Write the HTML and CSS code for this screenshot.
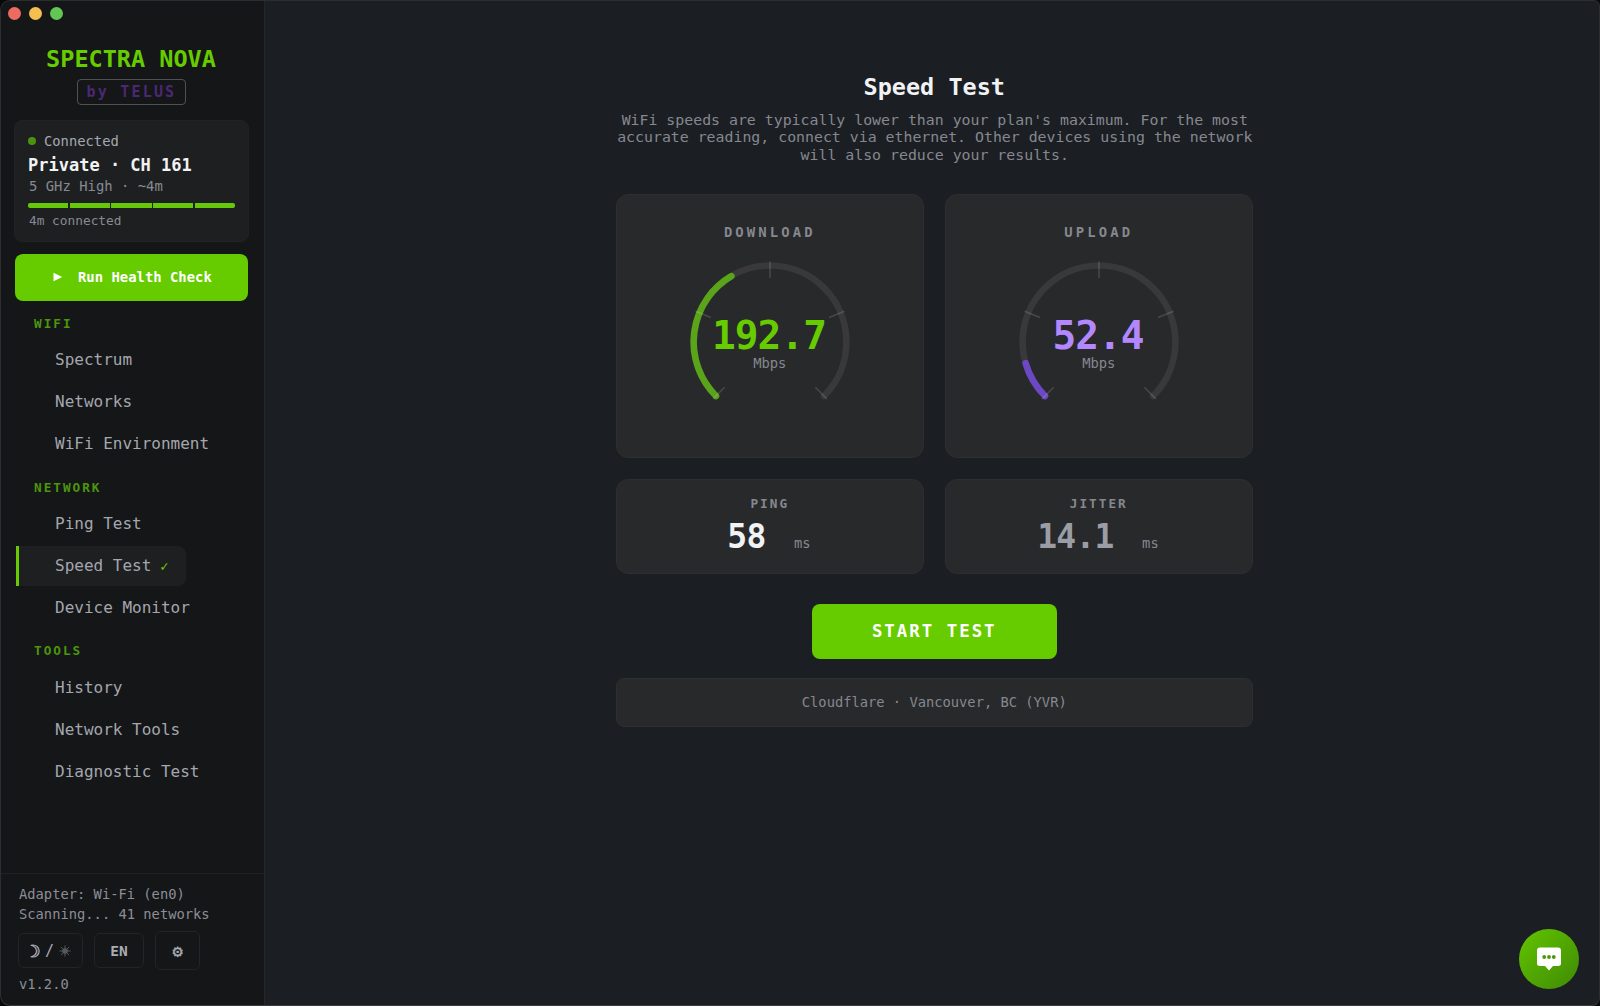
FILE: index.html
```html
<!DOCTYPE html>
<html lang="en">
<head>
<meta charset="utf-8">
<title>Spectra Nova</title>
<link rel="stylesheet" href="styles.css">
</head>
<body>
<div class="window">
  <aside class="sidebar">
    <div class="lights"><i class="light red"></i><i class="light amber"></i><i class="light green"></i></div>
    <div class="brand">
      <div class="brand-name">SPECTRA NOVA</div>
      <div class="brand-by">by TELUS</div>
    </div>
    <section class="status">
      <div class="status-state"><i class="dot"></i>Connected</div>
      <div class="status-name">Private · CH 161</div>
      <div class="status-band">5 GHz High · ~4m</div>
      <div class="signal"><i></i><i></i><i></i><i></i><i></i></div>
      <div class="status-time">4m connected</div>
    </section>
    <button class="health"><svg width="10" height="10" viewBox="0 0 10 10"><path d="M0.5 0.8 9.2 5 0.5 9.2Z" fill="#fff"/></svg><span>Run Health Check</span></button>
    <nav class="nav">
      <h3>WIFI</h3>
      <a>Spectrum</a>
      <a>Networks</a>
      <a>WiFi Environment</a>
      <h3>NETWORK</h3>
      <a>Ping Test</a>
      <a class="active">Speed Test<span class="check">✓</span></a>
      <a>Device Monitor</a>
      <h3>TOOLS</h3>
      <a>History</a>
      <a>Network Tools</a>
      <a>Diagnostic Test</a>
    </nav>
    <footer class="side-foot">
      <div class="foot-line">Adapter: Wi-Fi (en0)</div>
      <div class="foot-line">Scanning... 41 networks</div>
      <div class="foot-buttons">
        <button class="tool theme">
          <svg width="10" height="14" viewBox="0 0 10 14"><path d="M1 1.2C6.5 .2 9.2 3.6 9.2 7S6.5 13.8 1 12.8C4.500 11.800 6.400 9.600 6.400 7S4.500 2.200 1 1.200Z" fill="#a9acb3" fill-opacity=".35" stroke="#a9acb3" stroke-width="1.100" stroke-linejoin="round"/></svg>
          <span>/</span>
          <svg width="12" height="12" viewBox="-6 -6 12 12"><circle r="2.8" fill="#55585d"/><path d="M0-5.500V5.500M-5.500 0H5.500M-3.900-3.900 3.900 3.900M3.900-3.900-3.900 3.900" stroke="#55585d"/></svg>
        </button>
        <button class="tool lang">EN</button>
        <button class="tool gear">⚙</button>
      </div>
      <div class="foot-line version">v1.2.0</div>
    </footer>
  </aside>
  <main class="main">
    <div class="column">
      <h1>Speed Test</h1>
      <p class="intro">WiFi speeds are typically lower than your plan's maximum. For the most<br>accurate reading, connect via ethernet. Other devices using the network<br>will also reduce your results.</p>
      <div class="cards">
        <section class="card">
          <h2>DOWNLOAD</h2>
          <div class="gauge">
            <svg width="180" height="180" viewBox="-90 -91 180 180">
              <path class="track" d="M-54 54A76.4 76.4 0 1 1 54 54"/>
              <path class="arc down" d="M-54 54A76.4 76.4 0 0 1 -38.6 -65.9"/>
              <g class="ticks"><path d="M-57 57-45.3 45.3M-74.4-30.8-59.1-24.5M0-80.6V-64M74.4-30.8 59.1-24.5M57 57 45.3 45.3"/></g>
            </svg>
            <div class="reading"><span class="value green-text">192.7</span><span class="unit">Mbps</span></div>
          </div>
        </section>
        <section class="card">
          <h2>UPLOAD</h2>
          <div class="gauge">
            <svg width="180" height="180" viewBox="-90 -91 180 180">
              <path class="track" d="M-54 54A76.4 76.4 0 1 1 54 54"/>
              <path class="arc up" d="M-54 54A76.4 76.4 0 0 1 -73.4 21.2"/>
              <g class="ticks"><path d="M-57 57-45.3 45.3M-74.4-30.8-59.1-24.5M0-80.6V-64M74.4-30.8 59.1-24.5M57 57 45.3 45.3"/></g>
            </svg>
            <div class="reading"><span class="value purple-text">52.4</span><span class="unit">Mbps</span></div>
          </div>
        </section>
        <section class="card stat">
          <h2>PING</h2>
          <div class="stat-row"><span class="stat-value">58</span><span class="unit">ms</span></div>
        </section>
        <section class="card stat">
          <h2>JITTER</h2>
          <div class="stat-row"><span class="stat-value muted">14.1</span><span class="unit">ms</span></div>
        </section>
      </div>
      <button class="start">START TEST</button>
      <div class="server">Cloudflare · Vancouver, BC (YVR)</div>
    </div>
  </main>
  <button class="chat"><svg width="24" height="24" viewBox="0 0 24 24"><path d="M3 0.5H21Q24 0.5 24 3.5V16.5Q24 19 21 19H16L12 23.5 8 19H3Q0 19 0 16.5V3.5Q0 0.5 3 0.5Z" fill="#fff"/><g fill="#4a9a05"><circle cx="7.2" cy="10" r="1.9"/><circle cx="12" cy="10" r="1.9"/><circle cx="16.8" cy="10" r="1.9"/></g></svg></button>
</div>
</body>
</html>
```
FILE: styles.css
```css
* { box-sizing: border-box; }
body { margin: 0; background: #08080a; font-family: "DejaVu Sans Mono", monospace; }
h1, h2, h3, p { margin: 0; }
button { font-family: inherit; padding: 0; border: 0; }
i { display: block; }

.window { position: relative; display: flex; width: 1600px; height: 1006px; border-radius: 10px 6px 8px 10px; background: #1b1e23; overflow: hidden; }
.window::after { content: ""; position: absolute; inset: 0; border: 1px solid #2b2d32; border-bottom-color: #3a3b40; border-radius: inherit; pointer-events: none; }

.sidebar { display: flex; flex-direction: column; flex: none; width: 265px; background: #151618; border-right: 1px solid #23262a; }
.lights { display: flex; gap: 8px; padding: 7px 0 0 7.7px; height: 44px; }
.light { width: 13px; height: 13px; border-radius: 50%; }
.red { background: #ed6b60; }
.amber { background: #f5bf50; }
.green { background: #62c655; }

.brand { display: flex; flex-direction: column; align-items: center; width: 262px; }
.brand-name { font-size: 23.5px; line-height: 30px; font-weight: 700; color: #66cc00; }
.brand-by { margin-top: 5px; height: 26px; padding-left: 9px; width: 109px; border: 1px solid #505154; border-radius: 4px; font-size: 15px; line-height: 24px; font-weight: 700; letter-spacing: 2.2px; color: #4b2873; white-space: nowrap; }

.status { margin: 15px 0 0 14px; width: 235px; height: 122px; padding: 10px 13px; border: 1px solid #202224; border-radius: 8px; background: #1e1f21; }
.status-state { display: flex; align-items: center; gap: 8px; font-size: 13.8px; line-height: 20px; color: #a5a8b0; }
.dot { width: 8px; height: 8px; border-radius: 50%; background: #4c9210; }
.status-name { margin-top: 2px; font-size: 17px; line-height: 25px; font-weight: 700; color: #f1f2f4; }
.status-band { margin-top: -1px; padding-left: 1px; font-size: 13.9px; line-height: 19px; color: #868a93; }
.signal { display: flex; gap: 1.5px; margin-top: 7px; height: 4.5px; border-radius: 2px; overflow: hidden; }
.signal i { flex: 1; background: #66c80a; }
.status-time { margin-top: 3.5px; padding-left: 1px; font-size: 12.8px; line-height: 19px; color: #868a93; }

.health { display: flex; align-items: center; gap: 15px; margin: 12px 0 0 15px; width: 233px; height: 46.5px; padding-left: 38px; border-radius: 8px; background: #66cc00; color: #fff; font-size: 13.9px; font-weight: 700; flex: none; }
.health span { margin-top: -1px; }

.nav { display: flex; flex-direction: column; align-items: flex-start; padding-left: 16px; }
.nav h3 { padding: 13.5px 0 0 18px; height: 39.7px; font-size: 12.7px; line-height: 20px; letter-spacing: 2px; color: #4c960c; }
.nav a { display: flex; align-items: center; height: 40px; margin-bottom: 2px; padding: 0 17px 0 36px; border-left: 3px solid transparent; border-radius: 0 8px 8px 0; font-size: 16px; line-height: 20px; color: #a4a7ae; }
.nav a:has(+ h3) { margin-bottom: 0; }
.nav a.active { background: #1e1f21; border-left-color: #66cc00; }
.check { margin-left: 9px; font-size: 14px; font-weight: 700; color: #66cc00; }

.side-foot { margin-top: auto; height: 133px; padding: 10px 0 0 19px; border-top: 1px solid #1f2124; }
.foot-line { font-size: 13.78px; line-height: 20px; color: #8b8e97; }
.foot-buttons { display: flex; align-items: center; gap: 11px; margin: 7px 0 0 -1px; height: 39px; }
.tool { display: flex; align-items: center; justify-content: center; height: 35px; border: 1px solid #222427; border-radius: 6px; background: #151618; color: #a9acb3; }
.theme { width: 65px; gap: 4.5px; font-size: 15px; }
.lang { width: 50px; font-size: 14.5px; font-weight: 700; }
.gear { width: 45px; height: 39px; font-size: 17px; -webkit-text-stroke: .3px #a9acb3; }
.version { margin-top: 4px; }

.main { flex: 1; }
.column { display: flex; flex-direction: column; width: 636.5px; margin: 72px 0 0 351px; text-align: center; }
h1 { font-size: 23.5px; line-height: 30px; color: #f1f2f4; }
.intro { margin: 10px -5.5px 29.3px -4.5px; font-size: 14.87px; line-height: 17.4px; color: #85888f; white-space: nowrap; }

.cards { display: grid; grid-template-columns: 307.5px 307.5px; grid-template-rows: 264px 95px; gap: 21.5px; }
.card { padding-top: 27.5px; border: 1px solid #2d2e30; border-radius: 12px; background: #28292b; }
.card h2 { font-size: 13.9px; line-height: 20px; letter-spacing: 3.1px; color: #85888f; }
.gauge { display: grid; justify-content: center; margin-top: 9.3px; }
.gauge > * { grid-area: 1 / 1; }
.gauge svg { fill: none; }
.track { stroke: #39393b; stroke-width: 6.6; stroke-linecap: round; }
.arc { stroke-width: 6.6; stroke-linecap: round; }
.down { stroke: #5aa41a; }
.up { stroke: #6c48c4; }
.ticks { stroke: #fff; stroke-opacity: .15; stroke-width: 1.5; }
.reading { display: flex; flex-direction: column; align-items: center; padding-top: 66px; }
.value { margin-left: -1.5px; font-size: 39.5px; line-height: 37px; font-weight: 700; letter-spacing: -1px; }
.green-text { color: #66cc00; }
.purple-text { color: #b388ff; }
.unit { font-size: 13.8px; line-height: 18px; color: #85888f; }

.stat { padding-top: 14px; }
.stat h2 { font-size: 12.7px; letter-spacing: 2px; }
.stat-row { display: flex; align-items: baseline; justify-content: center; gap: 28.5px; margin: 4px 0 0 -1.5px; }
.stat-value { font-size: 33px; line-height: 38px; font-weight: 700; letter-spacing: -.8px; color: #f1f2f4; }
.stat-value.muted { color: #9a9da5; }

.start { align-self: center; width: 245px; height: 55px; margin: 29.5px 0 19.5px; border-radius: 8px; background: #66cc00; color: #fff; font-size: 17.4px; font-weight: 700; letter-spacing: 2px; }
.server { height: 48.5px; border: 1px solid #2d2e30; border-radius: 8px; background: #28292b; font-size: 13.75px; line-height: 47px; color: #85888f; }

.chat { position: absolute; right: 21px; bottom: 17px; display: flex; align-items: center; justify-content: center; width: 60px; height: 60px; border-radius: 50%; background: linear-gradient(135deg, #62c400, #3f8a05); }
```
